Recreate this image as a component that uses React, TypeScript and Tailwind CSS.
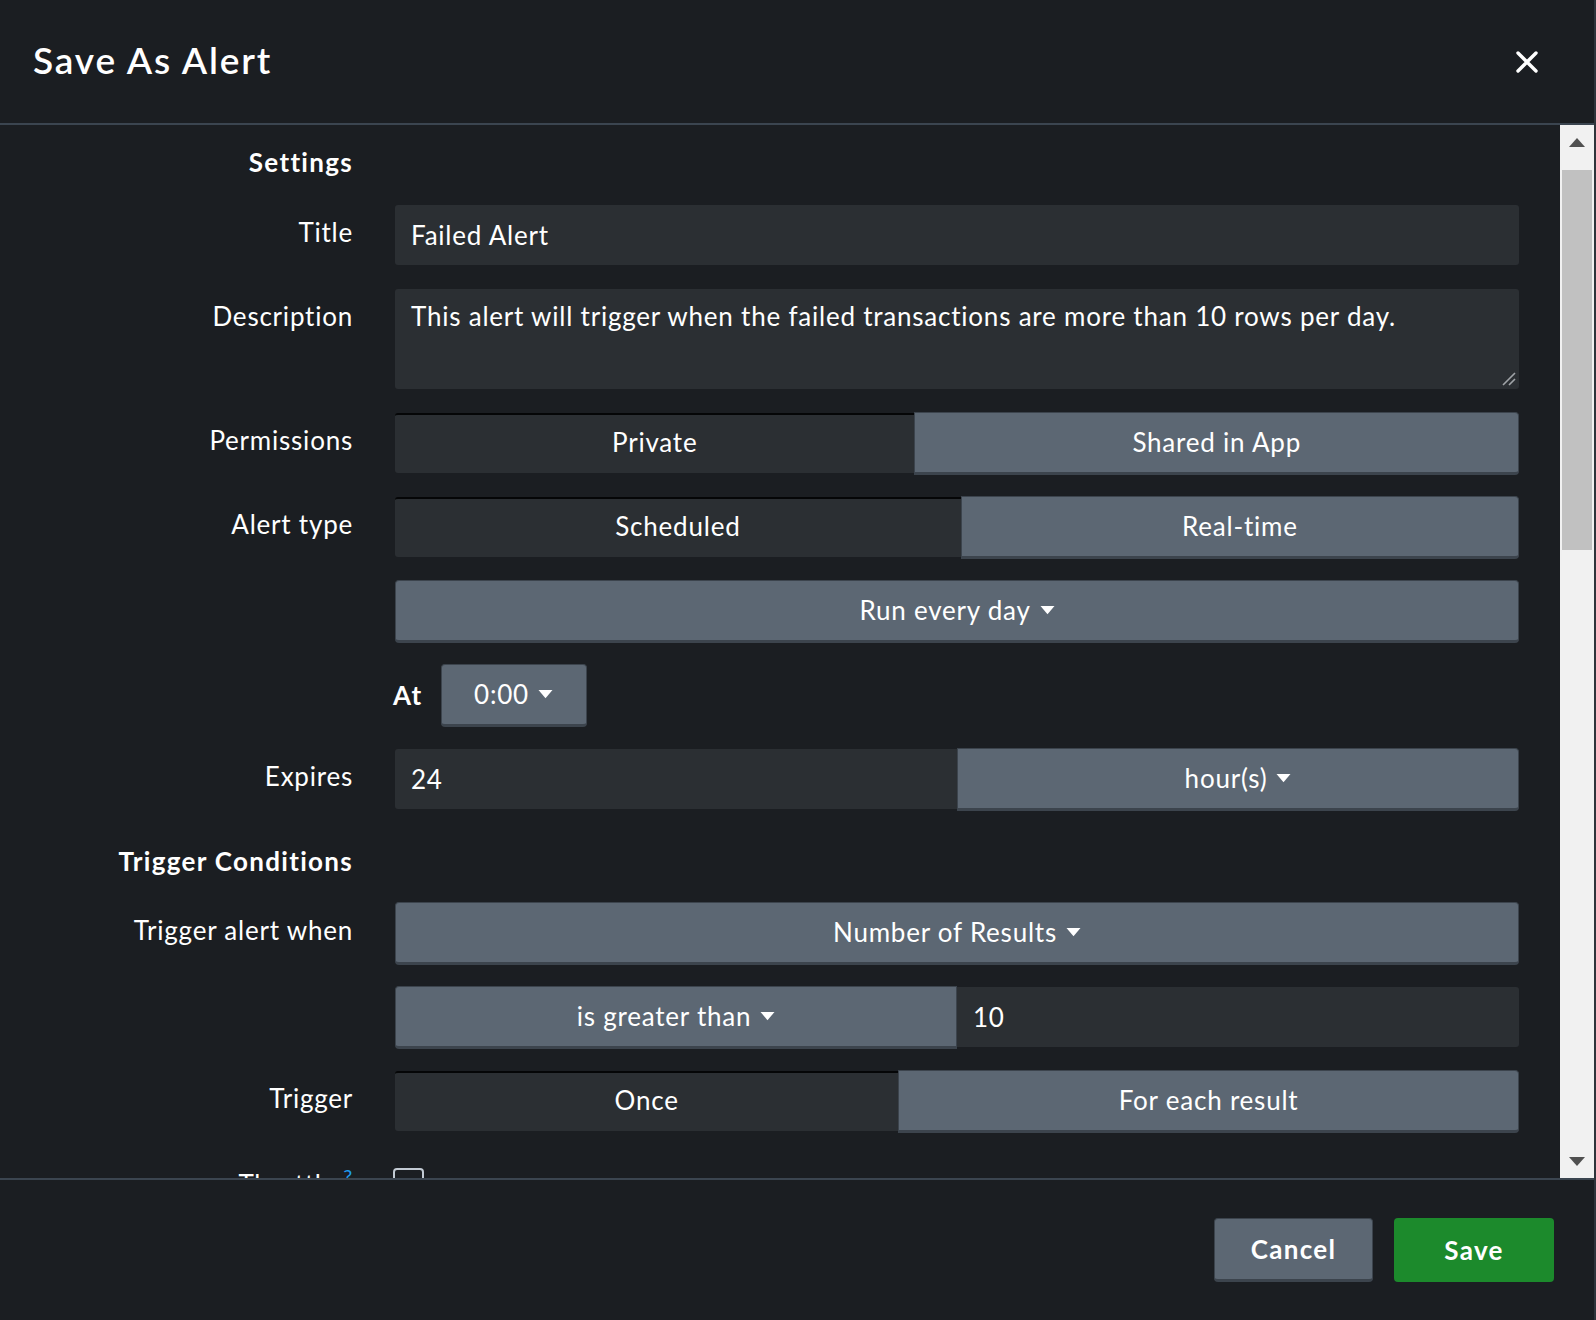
import React from "react";

const Caret = () => (
  <svg width="15" height="10" viewBox="0 0 15 10" className="ml-[9px] shrink-0">
    <path d="M0.5 1h14L7.5 9.2z" fill="currentColor" />
  </svg>
);

const Label = ({ children }: { children: React.ReactNode }) => (
  <div className="w-[353px] shrink-0 text-right pt-[12px] leading-[31px]">{children}</div>
);

const Row = ({ label, children, className = "" }: any) => (
  <div className={`flex gap-[42px] ${className}`}>
    <Label>{label}</Label>
    <div className="w-[1124px]">{children}</div>
  </div>
);

const Heading = ({ children, className = "" }: any) => (
  <div className={`flex gap-[43px] ${className}`}>
    <div className="w-[353px] h-[38px] flex items-center justify-end font-bold tracking-[0.05em]">{children}</div>
  </div>
);

// pressed / selected segment
const OnSeg = ({ children, className = "" }: any) => (
  <div
    className={`flex-auto h-[60px] flex items-center justify-center px-[16px] pb-[4px] bg-[#2b2f33] border-t-2 border-[#050607] ${className}`}
  >
    {children}
  </div>
);

// raised grey button
const OffSeg = ({ children, className = "" }: any) => (
  <div
    className={`flex-auto h-[63px] flex items-center justify-center px-[16px] bg-[#5c6773] border border-[#3c444d] border-b-[3px] ${className}`}
  >
    {children}
  </div>
);

export default function App() {
  return (
    <div className="w-[1596px] h-[1320px] flex bg-[#1b1e22] text-white text-[26px] tracking-[0.03em] font-['Lato','Noto_Sans',sans-serif]">
      <div className="w-[1594px] flex flex-col bg-[#1b1e22]">
        {/* header */}
        <div className="h-[125px] shrink-0 flex items-center justify-between pl-[33px] pr-[56px] border-b-2 border-[#3b4550]">
          <h1 className="text-[37px] font-semibold tracking-[0.05em] leading-none -mt-[4px]">Save As Alert</h1>
          <svg width="22" height="22" viewBox="0 0 22 22">
            <path d="M2 2L20 20M20 2L2 20" stroke="white" strokeWidth="3.4" strokeLinecap="round" />
          </svg>
        </div>

        {/* body */}
        <div className="h-[1053px] shrink-0 flex">
          <div className="flex-1 overflow-hidden pt-[18px]">
            <Heading className="mb-[24px]">Settings</Heading>

            <Row label="Title" className="mb-[24px]">
              <div className="h-[60px] flex items-center px-[16px] bg-[#2b2f33] rounded-[3px]">Failed Alert</div>
            </Row>

            <Row label="Description" className="mb-[24px]">
              <div className="relative h-[100px] px-[16px] pt-[12px] bg-[#2b2f33] rounded-[3px] leading-[31px]">
                This alert will trigger when the failed transactions are more than 10 rows per day.
                <svg width="14" height="14" viewBox="0 0 14 14" className="absolute right-[3px] bottom-[3px]">
                  <path d="M1 13L13 1M7 13L13 7" stroke="#a0a4a8" strokeWidth="1.6" />
                </svg>
              </div>
            </Row>

            <Row label="Permissions" className="mb-[24px]">
              <div className="flex h-[60px] items-center">
                <OnSeg className="rounded-l-[3px]">Private</OnSeg>
                <OffSeg className="rounded-r-[4px]">Shared in App</OffSeg>
              </div>
            </Row>

            <Row label="Alert type" className="mb-[24px]">
              <div className="flex h-[60px] items-center">
                <OnSeg className="rounded-l-[3px]">Scheduled</OnSeg>
                <OffSeg className="rounded-r-[4px]">Real-time</OffSeg>
              </div>
            </Row>

            <Row label="" className="mb-[24px]">
              <div className="flex h-[60px] items-center">
                <OffSeg className="rounded-[4px]">
                  Run every day
                  <Caret />
                </OffSeg>
              </div>
            </Row>

            <div className="flex gap-[40px] mb-[24px]">
              <div className="w-[353px] shrink-0" />
              <div className="flex h-[60px] items-center">
                <span className="font-bold tracking-[0.05em] mr-[18px]">At</span>
                <div className="w-[146px] h-[63px] flex items-center justify-center bg-[#5c6773] border border-[#3c444d] border-b-[3px] rounded-[4px]">
                  0:00
                  <Caret />
                </div>
              </div>
            </div>

            <Row label="Expires" className="mb-[33px]">
              <div className="flex h-[60px] items-center">
                <div className="w-1/2 shrink-0 h-[60px] flex items-center px-[16px] bg-[#2b2f33] rounded-l-[3px]">24</div>
                <div className="w-1/2 shrink-0 h-[63px] flex items-center justify-center bg-[#5c6773] border border-[#3c444d] border-b-[3px] rounded-r-[4px]">
                  hour(s)
                  <Caret />
                </div>
              </div>
            </Row>

            <Heading className="mb-[23px]">Trigger Conditions</Heading>

            <Row label="Trigger alert when" className="mb-[24px]">
              <div className="flex h-[60px] items-center">
                <OffSeg className="rounded-[4px]">
                  Number of Results
                  <Caret />
                </OffSeg>
              </div>
            </Row>

            <Row label="" className="mb-[24px]">
              <div className="flex h-[60px] items-center">
                <div className="w-1/2 shrink-0 h-[63px] flex items-center justify-center bg-[#5c6773] border border-[#3c444d] border-b-[3px] rounded-l-[4px]">
                  is greater than
                  <Caret />
                </div>
                <div className="w-1/2 shrink-0 h-[60px] flex items-center px-[16px] bg-[#2b2f33] rounded-r-[3px]">10</div>
              </div>
            </Row>

            <Row label="Trigger" className="mb-[22px]">
              <div className="flex h-[60px] items-center">
                <OnSeg className="rounded-l-[3px]">Once</OnSeg>
                <OffSeg className="rounded-r-[4px]">For each result</OffSeg>
              </div>
            </Row>

            <div className="flex gap-[40px]">
              <div className="w-[353px] shrink-0 text-right pt-[16px] leading-[31px]">
                Throttle
                <sup className="ml-[7px] text-[20px] text-[#1e9cf0]">?</sup>
              </div>
              <div className="mt-[15px] w-[31px] h-[31px] rounded-[4px] border-2 border-[#c3cbd4] bg-[#1b1e22]" />
            </div>
          </div>

          {/* scrollbar */}
          <div className="w-[34px] shrink-0 flex flex-col bg-[#f1f1f1]">
            <div className="h-[34px] flex items-center justify-center">
              <svg width="16" height="9" viewBox="0 0 16 9">
                <path d="M0 9L8 0L16 9z" fill="#505050" />
              </svg>
            </div>
            <div className="flex-1 pt-[11px] px-[2px]">
              <div className="h-[380px] bg-[#c1c1c1]" />
            </div>
            <div className="h-[34px] flex items-center justify-center">
              <svg width="16" height="9" viewBox="0 0 16 9">
                <path d="M0 0L8 9L16 0z" fill="#505050" />
              </svg>
            </div>
          </div>
        </div>

        {/* footer */}
        <div className="flex-1 flex items-center justify-end gap-[21px] pr-[40px] border-t-2 border-[#3b4550]">
          <button className="w-[159px] h-[64px] flex items-center justify-center font-bold tracking-[0.05em] bg-[#5c6773] border border-[#3c444d] border-b-[3px] rounded-[4px]">
            Cancel
          </button>
          <button className="w-[160px] h-[64px] flex items-center justify-center font-bold tracking-[0.05em] bg-[#1c8a2c] rounded-[4px]">
            Save
          </button>
        </div>
      </div>
      <div className="w-[2px] bg-[#2e343b]" />
    </div>
  );
}
